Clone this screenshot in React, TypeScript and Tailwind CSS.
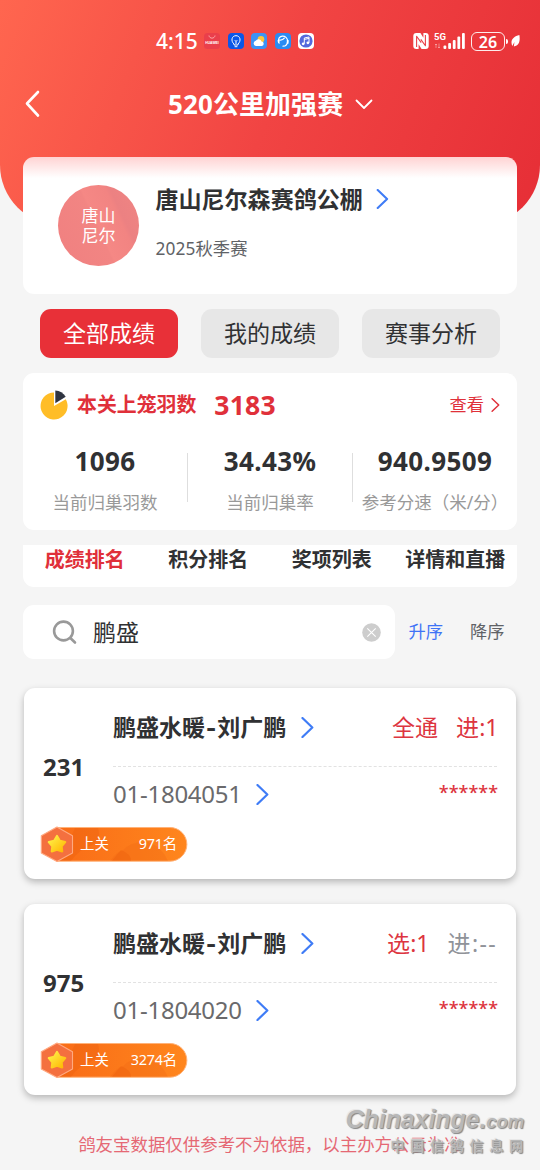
import React from 'react';

interface RaceRecord {
  rank: string;
  owner: [string, string];
  ring: string;
  first: string;
  second: string;
  secondMuted?: boolean;
  place: string;
}

const records: RaceRecord[] = [
  { rank: '231', owner: ['鹏盛水暖', '刘广鹏'], ring: '01-1804051', first: '全通', second: '进:1', place: '971名' },
  { rank: '975', owner: ['鹏盛水暖', '刘广鹏'], ring: '01-1804020', first: '选:1', second: '进:--', secondMuted: true, place: '3274名' },
];

const stats = [
  { value: '1096', label: '当前归巢羽数' },
  { value: '34.43%', label: '当前归巢率' },
  { value: '940.9509', label: '参考分速（米/分）' },
];

const Chevron = ({ className }: { className: string }) => (
  <svg viewBox="0 0 12 20" fill="none" stroke="currentColor" className={className}>
    <path d="M1.2 1 L10.6 10 L1.2 19" strokeWidth="2.1" strokeLinecap="round" strokeLinejoin="round" />
  </svg>
);

const AppIcons = () => (
  <div className="flex items-center gap-[7.5px]">
    <svg viewBox="0 0 16 16" className="h-4 w-4">
      <rect width="16" height="16" rx="3.5" fill="#ea3f4b" />
      <path d="M5 2.5 C5.4 6 10.6 6 11 2.5" fill="none" stroke="#fbb" strokeWidth=".8" />
      <text x="8" y="10.5" fontSize="3.4" fontWeight="700" textAnchor="middle" fill="#fff" fontFamily="Liberation Sans">HUAWEI</text>
    </svg>
    <svg viewBox="0 0 16 16" className="h-4 w-4" fill="none" stroke="#fff">
      <rect width="16" height="16" rx="4" fill="#0b57e8" stroke="none" />
      <path d="M6 11 C2.6 8 3.6 2.7 8 2.7 C12.4 2.7 13.4 8 10 11 V12 H6 Z M6.6 13.7 H9.4 M8 11 V8.5 L6.8 7.2 M8 8.5 L9.2 7.2" strokeWidth="1" />
    </svg>
    <svg viewBox="0 0 16 16" className="h-4 w-4">
      <rect width="16" height="16" rx="4" fill="#3c93f5" />
      <circle cx="10" cy="6.2" r="3.3" fill="#ffc53a" />
      <path d="M5 13 A2.7 2.7 0 0 1 4.7 7.7 A3.3 3.3 0 0 1 10.6 8.5 A2.3 2.3 0 0 1 11 13 Z" fill="#fff" />
    </svg>
    <svg viewBox="0 0 16 16" className="h-4 w-4" fill="none">
      <rect width="16" height="16" rx="4" fill="#2a8bf2" />
      <path d="M3.6 9 C2 1.5 12.5 1 12.7 8.5 M12.5 8.5 C12.3 11.8 10.5 13.2 8 13.2 M4.4 7 C7 7.4 8.3 6.6 9.3 5.2" stroke="#fff" strokeWidth="1.2" strokeLinecap="round" />
      <path d="M2.6 7 L4.4 7 L4.6 11 C3.2 10.8 2.6 9 2.6 7 Z M11.8 7 H13.6 V10.6 L12 11 Z" fill="#fff" />
    </svg>
    <svg viewBox="0 0 16 16" className="h-4 w-4">
      <rect width="16" height="16" rx="4" fill="#fff" />
      <circle cx="8" cy="8" r="6.6" fill="#5468dc" />
      <path d="M6.3 10.7 V5 L11 4 V9.7 M6.3 6.4 L11 5.4" fill="none" stroke="#fff" strokeWidth="1" />
      <circle cx="5.2" cy="10.8" r="1.4" fill="#fff" />
      <circle cx="9.9" cy="9.8" r="1.4" fill="#fff" />
    </svg>
  </div>
);

const StatusBar = () => (
  <div className="flex h-[82px] items-center pl-[156px]">
    <span className="mr-[6px] w-[42px] text-[21px] leading-6 font-medium whitespace-nowrap">4:15</span>
    <AppIcons />
    <div className="ml-[99px] flex items-center">
      <svg viewBox="0 0 16 16" className="h-4 w-4">
        <rect x=".3" y="0" width="15.4" height="16" rx="3" fill="#fff" />
        <path d="M3.6 14 V3.2 L8.2 9.6 M12.4 2 V12.8 L7.8 6.4" fill="none" stroke="#e9424a" strokeWidth="1.1" strokeLinejoin="round" />
        <path d="M5.6 16 V11.2 L8.6 16 Z M10.4 0 V4.8 L7.4 0 Z" fill="#e9424a" />
      </svg>
      <svg viewBox="0 0 34 18" className="ml-[5px] h-[18px] w-[34px]" fill="#fff">
        <text x="0" y="8.3" fontSize="9.5" fontWeight="700" textLength="12" fontFamily="Roboto">5G</text>
        <path d="M2 12 V16 M1 13 L2 12 L3 13 M5 11.5 V16 M4 15 L5 16 L6 15" stroke="#fff" strokeWidth=".7" fill="none" opacity=".55" />
        <rect x="9.5" y="13.5" width="2.8" height="3.5" rx="1" />
        <rect x="14.2" y="11" width="2.8" height="6" rx="1" />
        <rect x="18.8" y="8" width="2.8" height="9" rx="1" />
        <rect x="23.4" y="4.5" width="2.8" height="12.5" rx="1" />
        <rect x="28" y="1" width="2.8" height="16" rx="1" />
      </svg>
      <div className="ml-[3px] flex h-[19px] w-[34px] items-center justify-center rounded-[6px] border-[1.5px] border-white/90 pt-[1px] text-[16px] leading-none font-semibold">26</div>
      <div className="ml-[1px] h-[5px] w-[2px] rounded-r bg-white" />
      <svg viewBox="0 0 10 14" className="ml-[3px] h-[14px] w-[9px]">
        <path d="M9.3 .4 C3 2 -1.5 6 1.5 12.5 L3.8 8 L3.2 13 C9.5 12.5 10.3 6 9.3 .4 Z" fill="#fff" />
      </svg>
    </div>
  </div>
);

const PlaceBadge = ({ place }: { place: string }) => (
  <div className="relative ml-[16px] h-[36px] w-[148px]">
    <svg viewBox="0 0 148 36" className="absolute inset-0 h-9 w-[148px]">
      <defs>
        <linearGradient id="pill" x1="0" x2="1">
          <stop offset="0" stopColor="#f96c17" />
          <stop offset="1" stopColor="#ff861d" />
        </linearGradient>
        <linearGradient id="star" x1="0" y1="0" x2="1" y2="1">
          <stop offset="0" stopColor="#fff34d" />
          <stop offset="1" stopColor="#ffb500" />
        </linearGradient>
      </defs>
      <path d="M17 1.5 H130 A16.8 16.8 0 0 1 130 35.2 H17 Z" fill="url(#pill)" stroke="#ffb279" strokeWidth="1" />
      <path d="M35 2 H58 Q62 14 50 20 Q40 23 31 35 H20 Z" fill="#e75b0b" opacity=".28" />
      <path d="M70 34.7 Q77 25 82 25 Q90 15 108 16 Q121 20 128 34.7 Z" fill="#ef6815" opacity=".3" />
      <path d="M72 34.7 L81 24 Q91 28 91 34.7 Z" fill="#e75b0b" opacity=".3" />
      <path d="M17 1 L32.5 9.8 V27 L17 35.5 L1.3 27 V9.8 Z" fill="#f4703f" stroke="#ffa980" strokeWidth="1.1" strokeLinejoin="round" />
      <path d="M17 10 L19.8 14.8 L25.2 16 L21.6 20.4 L22.2 25.4 L17 23.8 L11.8 25.4 L12.4 20.4 L8.8 16 L14.2 14.8 Z" fill="url(#star)" stroke="url(#star)" strokeWidth="2.2" strokeLinejoin="round" />
    </svg>
    <div className="relative flex h-9 items-center justify-between pr-[11px] pl-[40px] text-[14.4px] leading-5 text-white">
      <span>上关</span>
      <span className="tracking-[-0.2px]">{place}</span>
    </div>
  </div>
);

const RecordCard = ({ record }: { record: RaceRecord }) => (
  <div className="mx-6 h-[191px] rounded-[11px] bg-white pt-5 shadow-[0_3px_7px_rgba(0,0,0,0.26)]">
    <div className="flex h-[118px]">
      <div className="flex w-[89px] items-center pl-[19px] text-[24px] font-bold text-[#303133]">{record.rank}</div>
      <div className="mr-[19px] flex-1">
        <div className="flex h-[38px] items-center">
          <span className="flex text-[23.04px] font-bold whitespace-nowrap text-[#303133]">
            {record.owner[0]}
            <span className="w-[12px] scale-x-125 text-center">-</span>
            {record.owner[1]}
          </span>
          <Chevron className="ml-[15px] h-[21px] w-[13px] text-[#3f7cf6]" />
          <div className="-mr-[1.5px] ml-auto flex gap-[18px] text-[23.04px] whitespace-nowrap text-[#dd3540]">
            <span>{record.first}</span>
            <span className={record.secondMuted ? 'w-[51px] tracking-[1.4px] text-[#909399]' : ''}>{record.second}</span>
          </div>
        </div>
        <div className="mt-5 border-t border-dashed border-[#e2e2e2]" />
        <div className="mt-[8px] flex h-[38px] items-center">
          <span className="w-[128px] text-[24px] tracking-[-0.25px] whitespace-nowrap text-[#6a6a6c]">{record.ring}</span>
          <Chevron className="ml-[15px] h-[21px] w-[13px] text-[#3f7cf6]" />
          <span className="-mr-px mb-[4px] ml-auto text-[18px] font-medium text-[#dd3540]">******</span>
        </div>
      </div>
    </div>
    <PlaceBadge place={record.place} />
  </div>
);

export default function App() {
  return (
    <div className="relative h-[1170px] w-[540px] overflow-hidden bg-[#f5f5f5] font-['Noto_Sans','Noto_Sans_CJK_SC',sans-serif]">
      <header className="h-[225px] rounded-b-[60px] bg-[linear-gradient(112deg,#ff664f_0%,#f14443_50%,#e62e36_100%)] text-white">
        <StatusBar />
        <div className="flex h-[44px] items-center pl-[25px]">
          <svg viewBox="0 0 15 28" className="h-7 w-[15px]" fill="none" stroke="#fff" strokeWidth="2.6" strokeLinecap="round" strokeLinejoin="round">
            <path d="M13 2 L2 13.5 L13 25.5" />
          </svg>
          <h1 className="ml-[128px] text-[25.92px] font-bold tracking-[0.15px] whitespace-nowrap">520公里加强赛</h1>
          <svg viewBox="0 0 18 11" className="ml-[12px] h-[11px] w-[18px]" fill="none" stroke="#fff" strokeWidth="1.8" strokeLinecap="round" strokeLinejoin="round">
            <path d="M1.5 1.5 L9 9 L16.5 1.5" />
          </svg>
        </div>
      </header>

      <section className="mx-[23px] -mt-[68px] flex h-[137px] rounded-[11px] bg-white bg-[linear-gradient(180deg,#ffd3d3_0px,#ffffff_21px)]">
        <div className="mt-[28px] ml-[35px] flex h-[81px] w-[81px] items-center justify-center rounded-full bg-[linear-gradient(65deg,#f08080_0%,#f28583_48%,#f58885_50%,#f28482_70%,#ec8182_74%,#f08583_100%)] text-center text-[17px] leading-5 text-white">
          唐山<br />尼尔
        </div>
        <div className="ml-[16.5px] pt-[26px]">
          <div className="flex h-8 items-center">
            <span className="text-[23.04px] font-bold text-[#303133]">唐山尼尔森赛鸽公棚</span>
            <Chevron className="ml-[13px] h-[20px] w-[13px] text-[#3f7cf6]" />
          </div>
          <div className="mt-[22px] text-[17.28px] leading-6 tracking-[0.1px] text-[#606266]">2025秋季赛</div>
        </div>
      </section>

      <div className="mx-10 mt-[15px] grid grid-cols-3 gap-[23px] text-[23.04px] text-[#303133]">
        <button className="h-[49px] rounded-[11px] bg-[#e83038] text-white">全部成绩</button>
        <button className="h-[49px] rounded-[11px] bg-[#e7e7e7]">我的成绩</button>
        <button className="h-[49px] rounded-[11px] bg-[#e7e7e7]">赛事分析</button>
      </div>

      <section className="mx-[23px] mt-[15px] h-[157px] rounded-[11px] bg-white">
        <div className="flex h-16 items-center px-[17px] text-[#e0303a]">
          <svg viewBox="0 0 28 30" className="h-[30px] w-7">
            <path d="M14 2.5 A13.5 13.5 0 1 0 25.8 9.3 L14 16 Z" fill="#ffbd27" />
            <path d="M15.3 .5 A13.3 13.3 0 0 1 25.7 6.8 L15.3 13.3 Z" fill="#2f3440" />
          </svg>
          <span className="ml-[9px] text-[19.9px] font-bold">本关上笼羽数</span>
          <span className="ml-[18px] pt-[2px] text-[26.5px] font-bold tracking-[0.2px]">3183</span>
          <span className="ml-auto text-[17.28px]">查看</span>
          <Chevron className="ml-[7px] h-[14px] w-[9px]" />
        </div>
        <div className="flex">
          {stats.map((s, i) => (
            <React.Fragment key={s.label}>
              {i > 0 && <div className="mt-4 h-[49px] w-px bg-[#dedede]" />}
              <div className="w-0 flex-1 text-center">
                <div className="text-[26px] leading-[48px] font-bold tracking-[0.4px] text-[#303133]">{s.value}</div>
                <div className="flex justify-center pt-px text-[17.5px] leading-8 whitespace-nowrap text-[#999999]">{s.label}</div>
              </div>
            </React.Fragment>
          ))}
        </div>
      </section>

      <nav className="mx-[23px] mt-[15px] grid h-[42px] grid-cols-4 rounded-b-[11px] bg-white text-center text-[20px] leading-[29px] font-bold whitespace-nowrap text-[#303133]">
        <span className="text-[#e0303a]">成绩排名</span>
        <span>积分排名</span>
        <span>奖项列表</span>
        <span>详情和直播</span>
      </nav>

      <div className="mt-[18px] ml-[23px] flex h-[54px] items-center text-[17.28px]">
        <div className="flex h-full w-[372px] items-center rounded-[11px] bg-white pr-[14px] pl-[29px]">
          <svg viewBox="0 0 25 25" className="h-[25px] w-[25px]" fill="none" stroke="#999" strokeWidth="2.6" strokeLinecap="round">
            <circle cx="11.5" cy="11" r="9.4" />
            <path d="M18.6 18.2 L23 22.5" />
          </svg>
          <span className="ml-[16px] text-[23.04px] text-[#303133]">鹏盛</span>
          <svg viewBox="0 0 19 19" className="ml-auto h-[19px] w-[19px]">
            <circle cx="9.5" cy="9.5" r="9.3" fill="#cdcdcd" />
            <path d="M5.3 5.3 L13.7 13.7 M13.7 5.3 L5.3 13.7" stroke="#fff" strokeWidth="1.1" />
          </svg>
        </div>
        <span className="ml-[13.5px] text-[#3f73f6]">升序</span>
        <span className="ml-[27px] text-[#606266]">降序</span>
      </div>

      <div className="mt-[29px] flex flex-col gap-[25px]">
        {records.map((r) => (
          <RecordCard key={r.rank} record={r} />
        ))}
      </div>

      <p className="mt-[37px] text-center text-[17.45px] leading-6 whitespace-nowrap text-[#e56874]">鸽友宝数据仅供参考不为依据，以主办方公示为准</p>

      {/* site watermark */}
      <div className="absolute top-[1105px] right-[16px] flex flex-col items-end whitespace-nowrap text-[#b8b8b8] [text-shadow:1px_1px_1px_#858585,-1px_-1px_0_#e8e8e8]">
        <div className="font-['Liberation_Sans',sans-serif] text-[25px] leading-[28px] font-bold tracking-[-0.1px] italic">
          Chinaxinge.<span className="text-[18.5px]">com</span>
        </div>
        <div className="-mr-[5px] font-['Noto_Sans_CJK_SC',sans-serif] text-[14px] leading-[22px] font-bold tracking-[5.8px]">
          <span className="relative -top-[2px]">中国信鸽信息网</span>
        </div>
      </div>
    </div>
  );
}
